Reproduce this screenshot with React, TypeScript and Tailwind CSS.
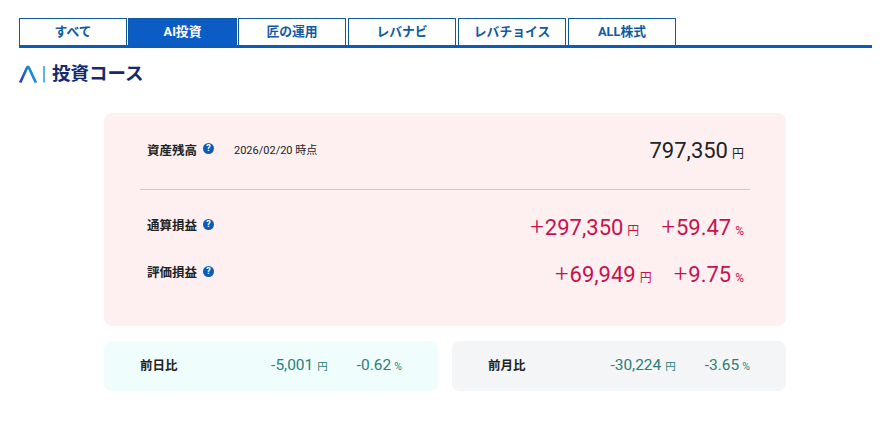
const FONT = "font-['Roboto','Noto_Sans_CJK_JP',sans-serif]";

const TABS = ["すべて", "AI投資", "匠の運用", "レバナビ", "レバチョイス", "ALL株式"];

function HelpIcon() {
  return (
    <span className="mb-[5px] ml-[6px] flex h-[11px] w-[11px] items-center justify-center rounded-full bg-[#0b5cb8] text-[9px] leading-none font-bold text-white">
      ?
    </span>
  );
}

function Logo() {
  return (
    <svg width="29" height="18" viewBox="0 0 29 18" fill="none">
      <defs>
        <linearGradient id="logo-a" x1="0" y1="1" x2="1" y2="0.6">
          <stop offset="0" stopColor="#3a36c0" />
          <stop offset="0.55" stopColor="#1670d8" />
          <stop offset="1" stopColor="#1c9ad8" />
        </linearGradient>
      </defs>
      <path d="M1.2 17.5 L8 2.8 Q9 1 10 2.8 L16.8 17.5" stroke="url(#logo-a)" strokeWidth="2.7" />
      <path d="M25 1 V17.5" stroke="#62aeee" strokeWidth="2" />
    </svg>
  );
}

function Label({ text }: { text: string }) {
  return (
    <div className="flex w-[87px] items-center text-[12.5px] font-bold text-[#222]">
      {text}
      <HelpIcon />
    </div>
  );
}

function Amount({ value, unit, className }: { value: string; unit: string; className?: string }) {
  const signed = value.startsWith("+");
  return (
    <span className={`flex items-baseline ${className ?? ""}`}>
      {signed && <span className="mr-[1px] text-[24px] leading-none font-light">+</span>}
      <span className="text-[22px] leading-none font-normal">{signed ? value.slice(1) : value}</span>
      <span className="ml-[4px] text-[12px] leading-none">{unit}</span>
    </span>
  );
}

function DiffCard({ label, yen, pct, bg }: { label: string; yen: string; pct: string; bg: string }) {
  return (
    <div className={`flex h-[50px] flex-1 items-center rounded-lg px-[36px] ${bg}`}>
      <span className="text-[12.5px] font-bold text-[#222]">{label}</span>
      <div className="ml-auto flex items-baseline text-[#2c7d78]">
        <span className="text-[15.5px]">{yen}</span>
        <span className="ml-[4px] text-[10.5px]">円</span>
        <span className="ml-[29px] text-[15.5px]">{pct}</span>
        <span className="ml-[3px] text-[10.5px]">%</span>
      </div>
    </div>
  );
}

export default function App() {
  return (
    <div className={`h-[427px] w-[888px] overflow-hidden bg-white ${FONT}`}>
      <div className="ml-[19px] w-[853px] pt-[18px]">
        <div className="flex gap-[2px] border-b-[3px] border-[#0b5cb8]">
          {TABS.map((tab, i) => (
            <div
              key={tab}
              className={`flex h-[27px] items-center justify-center border border-b-0 border-[#0f5a9e] text-[12.8px] font-bold ${
                i === 1 ? "-mx-px w-[109px] border-[#0b5cc4] bg-[#0b5cc4] text-white" : "w-[108px] bg-white text-[#0f5aa5]"
              }`}
            >
              {tab}
            </div>
          ))}
        </div>
        <div className="mt-[15px] flex items-center">
          <Logo />
          <span className="ml-[4px] text-[18.5px] leading-[22px] font-bold text-[#16296e]">投資コース</span>
        </div>
      </div>

      <div className="mt-[28px] ml-[104px] w-[682px]">
        <div className="h-[213px] rounded-lg bg-[#fef0f0] px-[36px]">
          <div className="flex h-[77px] items-center border-b border-[#cfc9c9] pr-[6px] pl-[7px]">
            <Label text="資産残高" />
            <span className="text-[11px] text-[#222]">2026/02/20 時点</span>
            <Amount value="797,350" unit="円" className="ml-auto text-[#222]" />
          </div>
          <div className="mt-[23px] flex h-[27px] items-center pr-[6px] pl-[7px]">
            <Label text="通算損益" />
            <div className="ml-auto flex items-baseline gap-[22px] text-[#c8124e]">
              <Amount value="+297,350" unit="円" />
              <Amount value="+59.47" unit="%" />
            </div>
          </div>
          <div className="mt-[20px] flex h-[27px] items-center pr-[6px] pl-[7px]">
            <Label text="評価損益" />
            <div className="ml-auto flex items-baseline gap-[22px] text-[#c8124e]">
              <Amount value="+69,949" unit="円" />
              <Amount value="+9.75" unit="%" />
            </div>
          </div>
        </div>
        <div className="mt-[15px] flex gap-[14px]">
          <DiffCard label="前日比" yen="-5,001" pct="-0.62" bg="bg-[#effdfd]" />
          <DiffCard label="前月比" yen="-30,224" pct="-3.65" bg="bg-[#f3f5f7]" />
        </div>
      </div>
    </div>
  );
}
